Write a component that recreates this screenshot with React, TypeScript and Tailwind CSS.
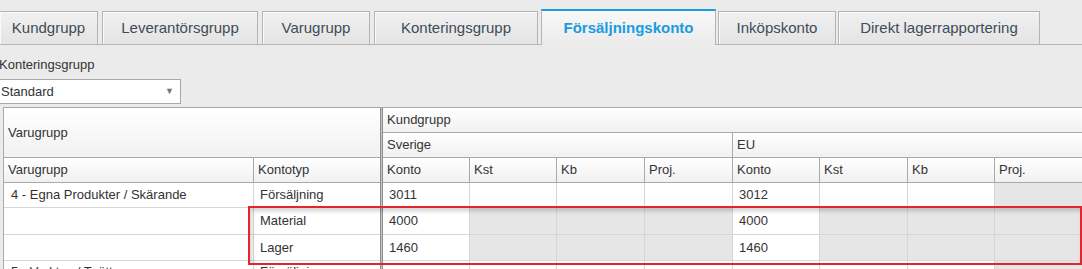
import { ChevronDown } from 'lucide-react'

type Tab = { label: string; width: string; gap: string; active?: boolean }

const tabs: Tab[] = [
  { label: 'Kundgrupp', width: 'w-[99px]', gap: 'ml-[-1px]' },
  { label: 'Leverantörsgrupp', width: 'w-[156px]', gap: 'ml-[4px]' },
  { label: 'Varugrupp', width: 'w-[108px]', gap: 'ml-[4px]' },
  { label: 'Konteringsgrupp', width: 'w-[164px]', gap: 'ml-[4px]' },
  { label: 'Försäljningskonto', width: 'w-[175px]', gap: 'ml-[3px]', active: true },
  { label: 'Inköpskonto', width: 'w-[118px]', gap: 'ml-[2px]' },
  { label: 'Direkt lagerrapportering', width: 'w-[202px]', gap: 'ml-[2px]' },
]

const colWidths = ['w-[87px]', 'w-[87px]', 'w-[88px]', 'w-[88px]', 'w-[87px]', 'w-[88px]', 'w-[87px]', 'w-[88px]']
const colNames = ['Konto', 'Kst', 'Kb', 'Proj.', 'Konto', 'Kst', 'Kb', 'Proj.']

type Row = {
  group: string
  type: string
  cells: (string | null)[]
  height: string
}

// null = disabled (grey) cell
const rows: Row[] = [
  { group: '4 - Egna Produkter / Skärande', type: 'Försäljning', cells: ['3011', '', '', '', '3012', '', '', null], height: 'h-[25px]' },
  { group: '', type: 'Material', cells: ['4000', null, null, null, '4000', null, null, null], height: 'h-[27px]' },
  { group: '', type: 'Lager', cells: ['1460', null, null, null, '1460', null, null, null], height: 'h-[26px]' },
  { group: '5 - Verktyg / Tvätt', type: 'Försäljning', cells: ['', '', '', '', '', '', '', null], height: 'h-[26px]' },
]

const hdr = 'bg-gradient-to-b from-white to-[#f1f1f1] border-[#a9a9a9]'

function Separator() {
  return <div className="w-[3px] shrink-0 self-stretch border-x border-[#8d8d8d] bg-[#c4c4c4]" />
}

export default function App() {
  return (
    <div
      className="relative w-[1082px] h-[269px] overflow-hidden bg-[#ebebeb] text-[13px] text-[#333]"
      style={{ fontFamily: '"Liberation Sans", Arial, sans-serif' }}
    >
      {/* tab strip */}
      <div className="flex items-end h-[45px] border-b border-[#b4b4b4]">
        {tabs.map((t) =>
          t.active ? (
            <div
              key={t.label}
              className={`${t.width} ${t.gap} h-[36px] mb-[-1px] shrink-0 flex items-start justify-center pt-[6px] border-x border-[#b4b4b4] border-t-2 border-t-[#1d9ce3] bg-gradient-to-b from-[#f8f8f8] to-[#ebebeb] text-[15px] font-bold text-[#1a9be0]`}
            >
              {t.label}
            </div>
          ) : (
            <div
              key={t.label}
              className={`${t.width} ${t.gap} h-[33px] shrink-0 flex items-center justify-center border border-b-0 border-[#b4b4b4] bg-gradient-to-b from-[#f0f0f0] to-[#e4e4e4] text-[15px] text-[#3e4c59] shadow-[inset_1px_1px_0_#fafafa]`}
            >
              {t.label}
            </div>
          ),
        )}
      </div>

      {/* filter */}
      <div className="ml-[-1px] mt-[12px] h-[16px] leading-[16px]">Konteringsgrupp</div>
      <div className="ml-[-1px] mt-[6px] w-[182px] h-[25px] flex items-center justify-between pl-[1px] pr-[6px] bg-white border border-[#a8a8a8]">
        <span>Standard</span>
        <ChevronDown size={10} strokeWidth={0} fill="#777" className="hidden" />
        <span className="text-[9px] text-[#777]">▼</span>
      </div>

      {/* grid */}
      <div className="ml-[3px] mt-[3px] border-l border-t border-[#a9a9a9] bg-white">
        {/* header */}
        <div className="flex">
          <div className="w-[376px] shrink-0 flex flex-col">
            <div className={`h-[50px] flex items-center pl-[4px] border-b ${hdr}`}>Varugrupp</div>
            <div className="h-[25px] flex border-b border-[#a9a9a9]">
              <div className={`w-[250px] flex items-center pl-[4px] border-r ${hdr}`}>Varugrupp</div>
              <div className={`flex-1 flex items-center pl-[4px] ${hdr}`}>Kontotyp</div>
            </div>
          </div>
          <Separator />
          <div className="flex-1 flex flex-col">
            <div className={`h-[25px] flex items-center pl-[4px] border-b border-r ${hdr}`}>Kundgrupp</div>
            <div className="h-[25px] flex border-b border-[#a9a9a9]">
              <div className={`w-[350px] flex items-center pl-[4px] border-r ${hdr}`}>Sverige</div>
              <div className={`flex-1 flex items-center pl-[4px] border-r ${hdr}`}>EU</div>
            </div>
            <div className="h-[25px] flex border-b border-[#a9a9a9]">
              {colNames.map((c, i) => (
                <div key={i} className={`${colWidths[i]} shrink-0 flex items-center pl-[4px] border-r ${hdr}`}>
                  {c}
                </div>
              ))}
            </div>
          </div>
        </div>

        {/* data rows */}
        {rows.map((r, ri) => {
          const align = ri === 3 ? 'items-start pt-[1px]' : 'items-center'
          return (
            <div key={ri} className={`flex ${r.height}`}>
              <div className="w-[376px] shrink-0 flex">
                <div className={`w-[250px] flex ${align} pl-[7px] border-r border-b border-[#d6d6d6] bg-white`}>
                  {r.group}
                </div>
                <div className={`flex-1 flex ${align} pl-[6px] border-b border-[#d6d6d6] bg-white`}>
                  {r.type}
                </div>
              </div>
              <Separator />
              <div className="flex-1 flex">
                {r.cells.map((c, i) => (
                  <div
                    key={i}
                    className={`${colWidths[i]} shrink-0 flex ${align} pl-[6px] border-r border-b border-[#d6d6d6] ${c === null ? 'bg-[#e6e6e6]' : 'bg-white'}`}
                  >
                    {c}
                  </div>
                ))}
              </div>
            </div>
          )
        })}
      </div>

      {/* highlight annotation */}
      <div className="absolute left-[248px] top-[206px] w-[834px] h-[59px] border-2 border-[#e3262a] shadow-[inset_2px_3px_4px_rgba(0,0,0,0.18)] pointer-events-none" />
    </div>
  )
}
